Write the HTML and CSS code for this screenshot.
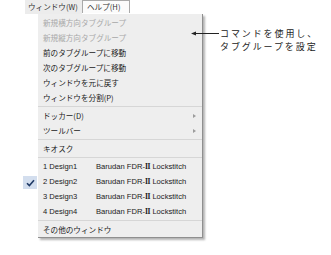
FILE: index.html
```html
<!DOCTYPE html>
<html lang="ja">
<head>
<meta charset="utf-8">
<link rel="stylesheet" href="styles.css">
</head>
<body>
<div class="page">
  <div class="menubar">
    <div class="tab tab-open">ウィンドウ(W)</div>
    <div class="tab tab-help">ヘルプ(H)</div>
  </div>
  <div class="dropdown-row">
    <div class="check-col">
      <div class="check-box">
        <svg width="9" height="8" viewBox="0 0 9 8"><path d="M1 4.2 L3.4 6.6 L8 1.2" fill="none" stroke="#1f3a66" stroke-width="1.6"/></svg>
      </div>
    </div>
    <div class="panel">
      <div class="item disabled">新規横方向タブグループ</div>
      <div class="item disabled">新規縦方向タブグループ</div>
      <div class="item">前のタブグループに移動</div>
      <div class="item">次のタブグループに移動</div>
      <div class="item">ウィンドウを元に戻す</div>
      <div class="item">ウィンドウを分割(P)</div>
      <div class="sep"></div>
      <div class="item sub">ドッカー(D)<span class="arrow"></span></div>
      <div class="item sub">ツールバー<span class="arrow"></span></div>
      <div class="sep"></div>
      <div class="item">キオスク</div>
      <div class="sep"></div>
      <div class="item doc"><span class="dname">1 Design1</span><span class="dmach">Barudan FDR-<span class="roman">II</span> Lockstitch</span></div>
      <div class="item doc"><span class="dname">2 Design2</span><span class="dmach">Barudan FDR-<span class="roman">II</span> Lockstitch</span></div>
      <div class="item doc"><span class="dname">3 Design3</span><span class="dmach">Barudan FDR-<span class="roman">II</span> Lockstitch</span></div>
      <div class="item doc"><span class="dname">4 Design4</span><span class="dmach">Barudan FDR-<span class="roman">II</span> Lockstitch</span></div>
      <div class="sep"></div>
      <div class="item">その他のウィンドウ</div>
    </div>
  </div>
  <div class="callout">
    <div class="callout-arrow">
      <svg width="28" height="7" viewBox="0 0 28 7"><path d="M0 3.5 L5 1.5 L5 5.5 Z" fill="#222"/><line x1="4" y1="3.5" x2="28" y2="3.5" stroke="#222" stroke-width="1"/></svg>
    </div>
    <div class="callout-text">コマンドを使用し、<br>タブグループを設定</div>
  </div>
</div>
</body>
</html>
```
FILE: styles.css
```css
html, body {
  margin: 0;
  padding: 0;
  background: #ffffff;
}
.page {
  position: relative;
  width: 331px;
  height: 255px;
  font-family: "Noto Sans CJK JP", "Liberation Sans", sans-serif;
  font-size: 7.6px;
  color: #1a1a1a;
}
.menubar {
  display: flex;
  padding-left: 25px;
  height: 14px;
  align-items: flex-start;
}
.tab {
  height: 14px;
  line-height: 14px;
  color: #333;
  box-sizing: border-box;
  white-space: nowrap;
}
.tab-open {
  width: 57px;
  padding-left: 3px;
  background: #ececec;
}
.tab-help {
  height: 13px;
  line-height: 12px;
  width: 48px;
  padding-left: 4px;
  border: 1px solid #a9a9a9;
  border-bottom: none;
  background: #fbfbfb;
}
.dropdown-row {
  display: flex;
}
.check-col {
  width: 38px;
  position: relative;
}
.check-box {
  position: absolute;
  left: 23px;
  top: 162px;
  width: 14px;
  height: 13px;
  box-sizing: border-box;
  background: #d3deee;
  display: flex;
  align-items: center;
  justify-content: center;
}
.panel {
  width: 165px;
  box-sizing: border-box;
  background: #eeeeee;
  padding-top: 1px;
  border-right: 1px solid #8f8f8f;
  border-bottom: 1px solid #8f8f8f;
  box-shadow: 2px 2px 2px rgba(0, 0, 0, 0.3);
}
.item {
  height: 15px;
  line-height: 15px;
  padding-left: 5px;
  display: flex;
  align-items: center;
  white-space: nowrap;
  position: relative;
}
.disabled {
  color: #a8a8a8;
}
.sub {
  justify-content: space-between;
  padding-right: 6px;
}
.arrow {
  width: 0;
  height: 0;
  border-top: 2.5px solid transparent;
  border-bottom: 2.5px solid transparent;
  border-left: 3px solid #9c9c9c;
}
.doc {
  font-family: "Liberation Sans", "Noto Sans CJK JP", sans-serif;
  font-size: 7.6px;
}
.dname {
  width: 53px;
}
.dmach {
  color: #1a1a1a;
}
.roman {
  font-family: "Liberation Serif", serif;
  font-weight: bold;
  letter-spacing: -0.3px;
}
.sep {
  height: 3px;
  display: flex;
  flex-direction: column;
  justify-content: center;
}
.sep::before {
  content: "";
  display: block;
  height: 1px;
  background: #d6d6d6;
}
.callout {
  position: absolute;
  left: 191px;
  top: 27px;
  display: flex;
  align-items: flex-start;
}
.callout-arrow {
  padding-top: 3px;
  width: 29px;
}
.callout-arrow svg {
  display: block;
}
.callout-text {
  font-size: 9px;
  line-height: 13px;
  letter-spacing: 1.9px;
  color: #222;
  white-space: nowrap;
}
```
